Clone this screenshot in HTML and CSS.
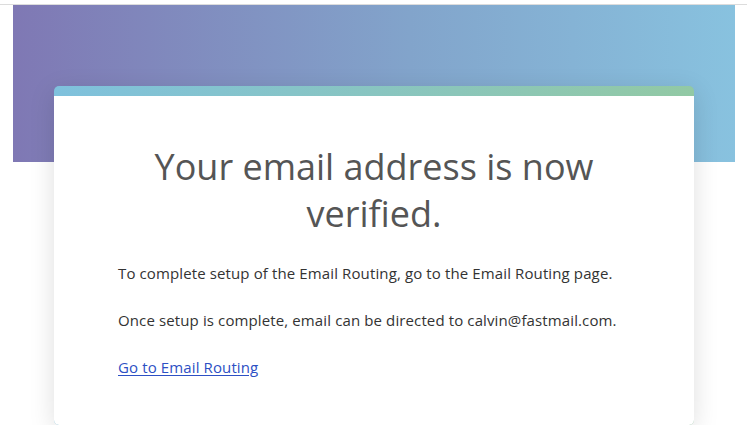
FILE: index.html
```html
<!DOCTYPE html>
<html lang="en">
<head>
<meta charset="utf-8">
<title>Email verified</title>
<link rel="stylesheet" href="styles.css">
</head>
<body>
<div class="topbar"></div>
<main class="page">
  <div class="banner"></div>
  <section class="card">
    <h1 class="title">Your email address is now verified.</h1>
    <p class="text">To complete setup of the Email Routing, go to the Email Routing page.</p>
    <p class="text">Once setup is complete, email can be directed to calvin@fastmail.com.</p>
    <p class="text"><a class="link" href="#">Go to Email Routing</a></p>
  </section>
</main>
</body>
</html>
```
FILE: styles.css
```css
* { box-sizing: border-box; }
html, body { margin: 0; padding: 0; background: #fff; }
body {
  font-family: "Open Sans", "Noto Sans", sans-serif;
  color: #333;
  overflow: hidden;
}
.topbar {
  height: 5px;
  border-bottom: 1px solid #dcdcdc;
}
.page {
  padding: 0 12px 0 13px;
}
.banner {
  height: 157px;
  background: linear-gradient(90deg, #7f78b4 0%, #82a4cb 55%, #88c2df 100%);
}
.card {
  width: 640px;
  margin: -76px auto 0;
  background: #fff;
  border-radius: 5px;
  border-top: 10px solid transparent;
  background-image: linear-gradient(#fff, #fff), linear-gradient(90deg, #7fc1dd 0%, #92c9a4 100%);
  background-origin: border-box;
  background-clip: padding-box, border-box;
  box-shadow: 0 6px 26px rgba(0, 0, 0, 0.13);
  padding: 47px 64px 46px;
  position: relative;
}
.title {
  margin: 0 0 24px;
  font-weight: 400;
  font-size: 36px;
  line-height: 47px;
  color: #555;
  text-align: center;
}
.text {
  margin: 0 0 23px;
  font-size: 15px;
  line-height: 24px;
  letter-spacing: 0.12px;
  color: #333;
}
.text:last-child { margin-bottom: 0; }
.link {
  color: #2d50c4;
  text-decoration: underline;
  text-underline-offset: 2px;
}
```
